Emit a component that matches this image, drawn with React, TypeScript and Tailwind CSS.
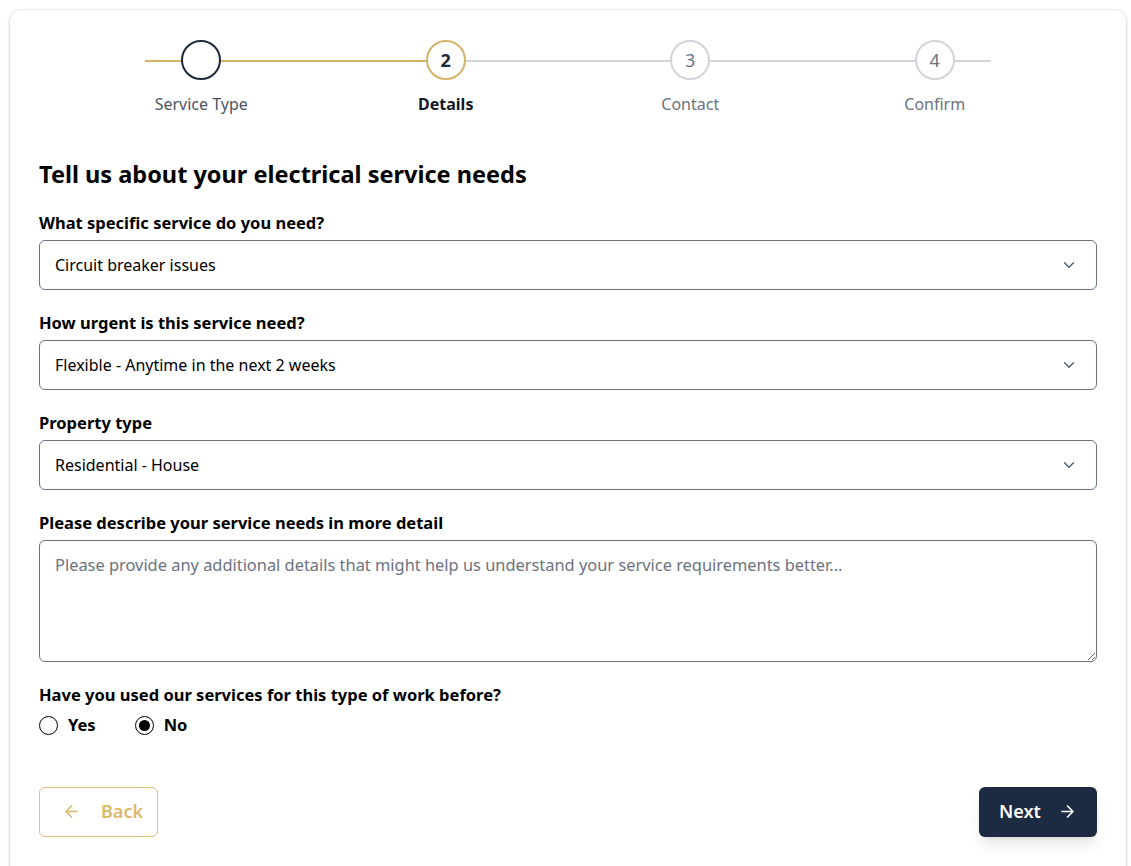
import React from "react";

const font = { fontFamily: '"Noto Sans", "Open Sans", sans-serif' };

function Chevron() {
  return (
    <svg width="18" height="18" viewBox="0 0 24 24" fill="none" stroke="#4b5563" strokeWidth="1.6" strokeLinecap="round" strokeLinejoin="round">
      <path d="M6 9l6 6 6-6" />
    </svg>
  );
}

function SelectBox({ value }: { value: string }) {
  return (
    <div className="flex h-[50px] items-center justify-between rounded-md border border-[#6b7280] pl-[15px] pr-[18px] text-[16px] text-black">
      <span>{value}</span>
      <Chevron />
    </div>
  );
}

function Label({ children }: { children: React.ReactNode }) {
  return <div className="text-[16.5px] font-bold leading-[22px] text-black">{children}</div>;
}

export default function App() {
  const steps = [
    { n: "", label: "Service Type" },
    { n: "2", label: "Details" },
    { n: "3", label: "Contact" },
    { n: "4", label: "Confirm" },
  ];
  return (
    <div className="min-h-[866px] bg-white pt-[9px]" style={font}>
      <div className="ml-[9px] w-[1118px] rounded-xl border border-gray-200 bg-white px-[29px] pb-[40px] pt-[30px] shadow-sm">
        {/* Stepper */}
        <div className="relative mx-auto w-[978px]">
          <div className="absolute left-[66px] top-[20px] h-[2px] w-[281px] bg-[#d4b26a]" />
          <div className="absolute left-[347px] right-[66px] top-[20px] h-[2px] bg-[#d1d5db]" />
          <div className="relative grid grid-cols-4">
            {steps.map((s, i) => (
              <div key={i} className="flex flex-col items-center">
                <div
                  className={
                    "flex h-[40px] w-[40px] items-center justify-center rounded-full border-2 bg-white text-[18px] " +
                    (i === 0
                      ? "border-[#1e293b]"
                      : i === 1
                      ? "border-[#d4b26a] font-bold text-[#1e293b]"
                      : "border-[#d1d5db] text-[#6b7280]")
                  }
                >
                  {s.n}
                </div>
                <div
                  className={
                    "mt-[13px] text-[16px] leading-[22px] " +
                    (i === 0 ? "text-[#4b5563]" : i === 1 ? "font-bold text-[#111827]" : "text-[#6b7280]")
                  }
                >
                  {s.label}
                </div>
              </div>
            ))}
          </div>
        </div>

        <h2 className="mt-[43px] text-[23.5px] font-bold leading-[32px] text-black">
          Tell us about your electrical service needs
        </h2>

        <div className="mt-[22px]">
          <Label>What specific service do you need?</Label>
          <div className="mt-[6px]">
            <SelectBox value="Circuit breaker issues" />
          </div>
        </div>
        <div className="mt-[22px]">
          <Label>How urgent is this service need?</Label>
          <div className="mt-[6px]">
            <SelectBox value="Flexible - Anytime in the next 2 weeks" />
          </div>
        </div>
        <div className="mt-[22px]">
          <Label>Property type</Label>
          <div className="mt-[6px]">
            <SelectBox value="Residential - House" />
          </div>
        </div>
        <div className="mt-[22px]">
          <Label>Please describe your service needs in more detail</Label>
          <textarea
            className="mt-[6px] block h-[122px] w-full resize-y rounded-md border border-[#6b7280] px-[15px] py-[12px] text-[16.4px] text-black outline-none placeholder:text-[#6b7280]"
            style={font}
            placeholder="Please provide any additional details that might help us understand your service requirements better..."
          />
        </div>
        <div className="mt-[22px]">
          <Label>Have you used our services for this type of work before?</Label>
          <div className="mt-[7px] flex items-center gap-[39px] text-[16.5px] font-bold text-black">
            <label className="flex items-center gap-[10px]">
              <span className="h-[19px] w-[19px] rounded-full border border-black bg-white" />
              Yes
            </label>
            <label className="flex items-center gap-[10px]">
              <span className="flex h-[19px] w-[19px] items-center justify-center rounded-full border border-black bg-white">
                <span className="h-[11px] w-[11px] rounded-full bg-black" />
              </span>
              No
            </label>
          </div>
        </div>

        <div className="mt-[49px] flex items-center justify-between">
          <button className="flex h-[50px] w-[119px] items-center gap-[20px] rounded-md border border-[#dcc07f] pl-[22px] text-[18px] font-semibold text-[#dcb96a]">
            <svg width="19" height="19" viewBox="0 0 24 24" fill="none" stroke="currentColor" strokeWidth="2" strokeLinecap="round" strokeLinejoin="round">
              <path d="M19 12H5M12 19l-7-7 7-7" />
            </svg>
            Back
          </button>
          <button className="flex h-[50px] w-[118px] items-center gap-[17px] rounded-md bg-[#1c2b42] pl-[20px] text-[18px] font-semibold text-white shadow-lg">
            Next
            <svg width="19" height="19" viewBox="0 0 24 24" fill="none" stroke="currentColor" strokeWidth="2" strokeLinecap="round" strokeLinejoin="round">
              <path d="M5 12h14M12 5l7 7-7 7" />
            </svg>
          </button>
        </div>
      </div>
    </div>
  );
}
